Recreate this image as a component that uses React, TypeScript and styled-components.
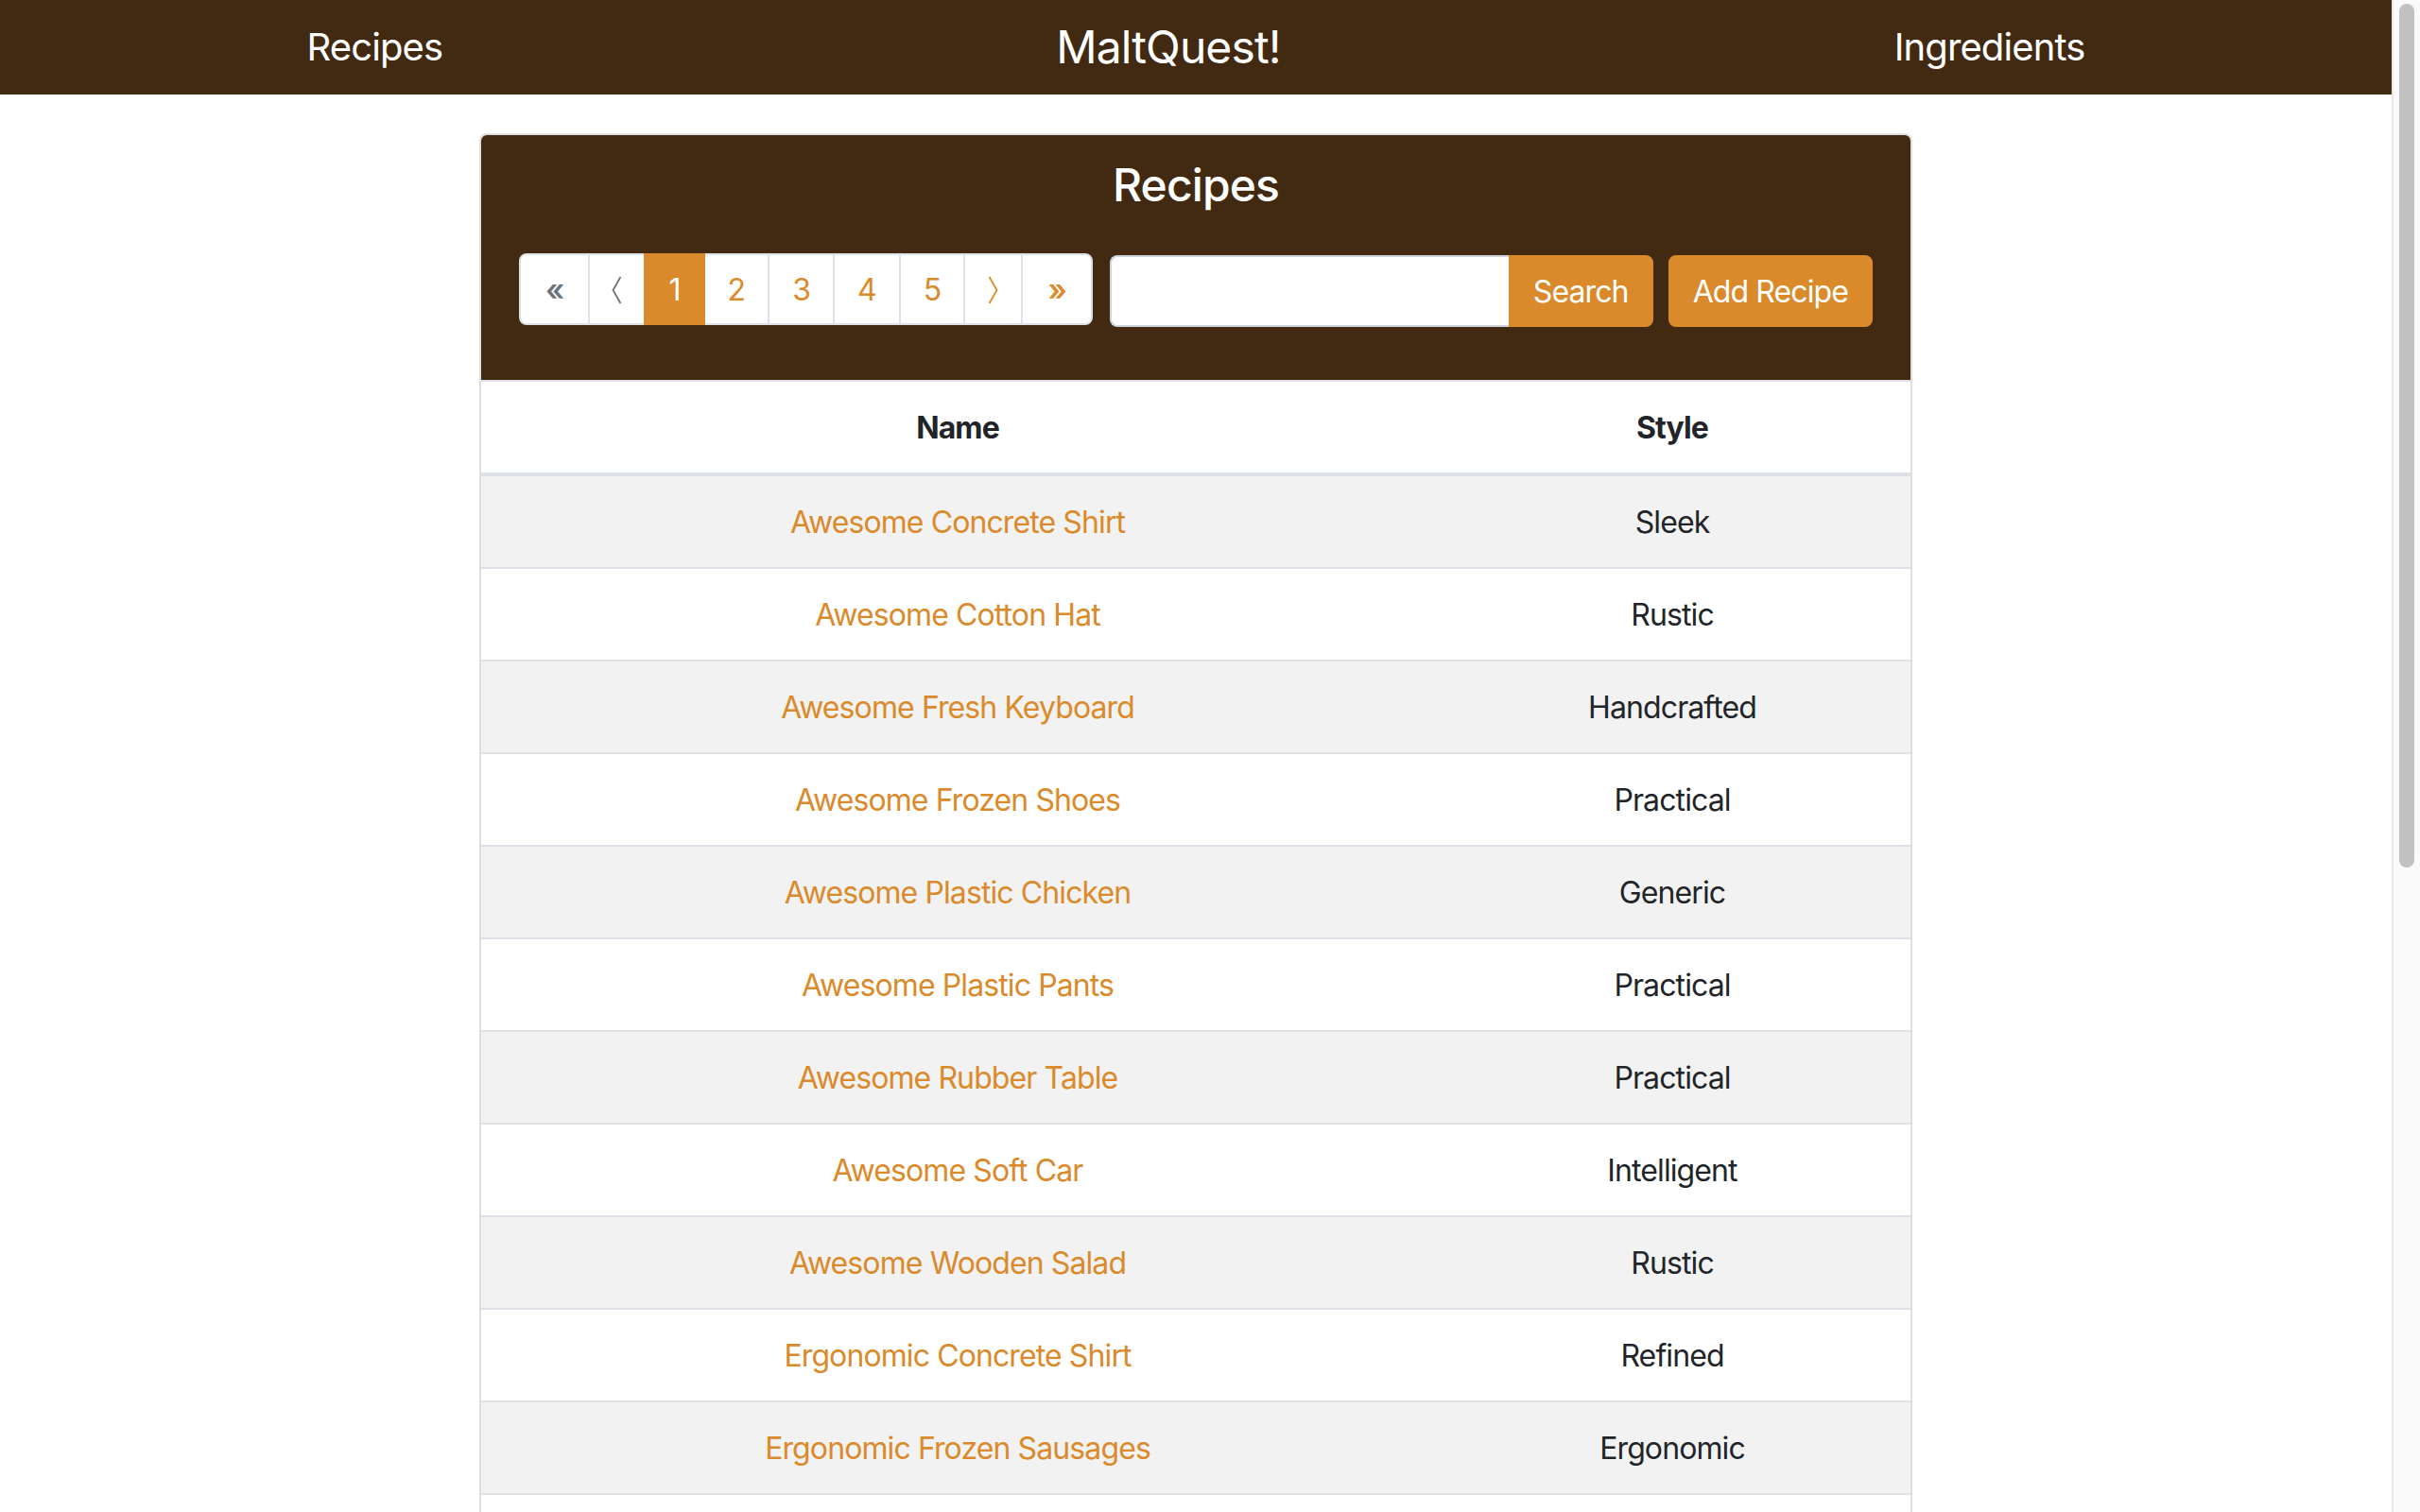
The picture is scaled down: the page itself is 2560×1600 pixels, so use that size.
import React from "react";
import styled, { createGlobalStyle } from "styled-components";

const ORANGE = "#da8a2b";
const BROWN = "#422a12";

const GlobalStyle = createGlobalStyle`
  html, body {
    margin: 0;
    padding: 0;
    height: 100%;
    overflow: hidden;
  }
  #root { height: 100%; }
  * { box-sizing: border-box; }
`;

const Screen = styled.div`
  display: flex;
  height: 100vh;
  overflow: hidden;
  background: #ffffff;
  font-family: "Inter", "Liberation Sans", sans-serif;
  font-size: 32px;
  line-height: 1.5;
  letter-spacing: -0.028em;
  color: #212529;
`;

const Viewport = styled.div`
  flex: 1;
  min-width: 0;
  overflow: hidden;
`;

const ScrollTrack = styled.div`
  flex: 0 0 30px;
  background: #fafafa;
  border-left: 2px solid #e8e8e8;
  padding: 4px 6px 0;
`;

const ScrollThumb = styled.div`
  height: 914px;
  border-radius: 8px;
  background: #c1c1c1;
`;

const NavBar = styled.nav`
  height: 100px;
  background: ${BROWN};
  display: flex;
  align-items: center;
  justify-content: space-around;
`;

const NavLink = styled.a<{ $brand?: boolean }>`
  color: #ffffff;
  text-decoration: none;
  font-size: ${(p) => (p.$brand ? "48px" : "40px")};
  font-weight: 400;
  line-height: 1.2;
  white-space: nowrap;
`;

const Main = styled.main`
  padding: 41px 0 32px;
`;

const Card = styled.section`
  width: 1516px;
  margin: 0 auto;
  border: 2px solid rgba(0, 0, 0, 0.125);
  border-radius: 8px;
  overflow: hidden;
  background: #ffffff;
`;

const CardHeader = styled.header`
  background: ${BROWN};
  padding: 24px 40px 24px;
  text-align: center;
`;

const Title = styled.h4`
  margin: 0 0 43px;
  font-size: 48px;
  font-weight: 500;
  line-height: 1.2;
  color: #ffffff;
`;

const Toolbar = styled.div`
  display: flex;
  align-items: flex-start;
  margin-bottom: 32px;
`;

const Pagination = styled.ul`
  display: flex;
  flex-shrink: 0;
  list-style: none;
  margin: 0;
  padding: 0;
`;

const PageItem = styled.li`
  display: flex;
  & + & { margin-left: -2px; }
  &:first-child > * { border-radius: 8px 0 0 8px; }
  &:last-child > * { border-radius: 0 8px 8px 0; }
`;

const PageLink = styled.a<{ $active?: boolean; $disabled?: boolean; $pad?: number; $bold?: boolean }>`
  display: flex;
  align-items: center;
  justify-content: center;
  height: 76px;
  padding: 17px ${(p) => p.$pad ?? 24}px 15px;
  line-height: 40px;
  font-size: 32px;
  font-weight: ${(p) => (p.$bold ? 600 : 400)};
  text-decoration: none;
  border: 2px solid ${(p) => (p.$active ? ORANGE : "#dee2e6")};
  background: ${(p) => (p.$active ? ORANGE : "#ffffff")};
  color: ${(p) => (p.$active ? "#ffffff" : p.$disabled ? "#6c757d" : ORANGE)};
  position: relative;
  z-index: ${(p) => (p.$active ? 1 : 0)};
`;

const SearchForm = styled.form`
  flex: 1;
  min-width: 0;
  display: flex;
  margin: 2px 0 0 18px;
`;

const SearchInput = styled.input`
  flex: 1;
  min-width: 0;
  height: 76px;
  padding: 12px 24px;
  font: inherit;
  border: 2px solid #ced4da;
  border-right: none;
  border-radius: 8px 0 0 8px;
  background: #ffffff;
  outline: none;
`;

const Button = styled.button<{ $attached?: boolean }>`
  flex-shrink: 0;
  height: 76px;
  padding: 2px 24px 0;
  font-family: inherit;
  font-size: 32px;
  font-weight: 400;
  line-height: 48px;
  letter-spacing: inherit;
  white-space: nowrap;
  color: #ffffff;
  background: ${ORANGE};
  border: 2px solid ${ORANGE};
  border-radius: ${(p) => (p.$attached ? "0 8px 8px 0" : "8px")};
  margin-top: ${(p) => (p.$attached ? "0" : "2px")};
  margin-left: ${(p) => (p.$attached ? "0" : "16px")};
  cursor: pointer;
`;

const Table = styled.table`
  width: 100%;
  border-collapse: collapse;
`;

const HeadCell = styled.th<{ $w: string }>`
  width: ${(p) => p.$w};
  padding: 25px 24px 23px;
  line-height: 48px;
  font-weight: 700;
  text-align: center;
  border-top: 2px solid #dee2e6;
  border-bottom: 4px solid #dee2e6;
`;

const Row = styled.tr`
  &:nth-child(odd) { background: rgba(0, 0, 0, 0.05); }
`;

const Cell = styled.td`
  padding: 25px 24px 23px;
  line-height: 48px;
  text-align: center;
  border-top: 2px solid #dee2e6;
`;

const RecipeLink = styled.a`
  color: ${ORANGE};
  text-decoration: none;
`;

const Chevron = ({ dir }: { dir: "left" | "right" }) => (
  <svg width="11" height="30" viewBox="0 0 11 30" aria-hidden>
    <polyline
      points={dir === "left" ? "9.5,1 1.5,15 9.5,29" : "1.5,1 9.5,15 1.5,29"}
      fill="none"
      stroke="currentColor"
      strokeWidth="1.8"
      strokeLinejoin="miter"
    />
  </svg>
);

const recipes: [string, string][] = [
  ["Awesome Concrete Shirt", "Sleek"],
  ["Awesome Cotton Hat", "Rustic"],
  ["Awesome Fresh Keyboard", "Handcrafted"],
  ["Awesome Frozen Shoes", "Practical"],
  ["Awesome Plastic Chicken", "Generic"],
  ["Awesome Plastic Pants", "Practical"],
  ["Awesome Rubber Table", "Practical"],
  ["Awesome Soft Car", "Intelligent"],
  ["Awesome Wooden Salad", "Rustic"],
  ["Ergonomic Concrete Shirt", "Refined"],
  ["Ergonomic Frozen Sausages", "Ergonomic"],
  ["Ergonomic Granite Bacon", "Licensed"],
  ["Ergonomic Wooden Pizza", "Tasty"],
  ["Fantastic Cotton Mouse", "Unbranded"],
  ["Fantastic Metal Chair", "Gorgeous"],
  ["Generic Fresh Tuna", "Small"],
  ["Generic Steel Computer", "Incredible"],
  ["Gorgeous Granite Ball", "Fantastic"],
  ["Handcrafted Rubber Gloves", "Licensed"],
  ["Incredible Concrete Hat", "Sleek"],
  ["Incredible Soft Fish", "Awesome"],
  ["Intelligent Frozen Cheese", "Rustic"],
  ["Licensed Granite Bike", "Refined"],
];

export default function App() {
  return (
    <>
      <GlobalStyle />
      <Screen>
        <Viewport>
          <NavBar>
            <NavLink href="#">Recipes</NavLink>
            <NavLink href="#" $brand>MaltQuest!</NavLink>
            <NavLink href="#">Ingredients</NavLink>
          </NavBar>
          <Main>
            <Card>
              <CardHeader>
                <Title>Recipes</Title>
                <Toolbar>
                  <Pagination>
                    <PageItem><PageLink href="#" $disabled $bold $pad={26}>«</PageLink></PageItem>
                    <PageItem><PageLink href="#" $disabled $pad={23}><Chevron dir="left" /></PageLink></PageItem>
                    <PageItem><PageLink href="#" $active>1</PageLink></PageItem>
                    <PageItem><PageLink href="#">2</PageLink></PageItem>
                    <PageItem><PageLink href="#">3</PageLink></PageItem>
                    <PageItem><PageLink href="#">4</PageLink></PageItem>
                    <PageItem><PageLink href="#">5</PageLink></PageItem>
                    <PageItem><PageLink href="#"><Chevron dir="right" /></PageLink></PageItem>
                    <PageItem><PageLink href="#" $bold $pad={26}>»</PageLink></PageItem>
                  </Pagination>
                  <SearchForm onSubmit={(e) => e.preventDefault()}>
                    <SearchInput type="text" />
                    <Button type="submit" $attached>Search</Button>
                  </SearchForm>
                  <Button type="button">Add Recipe</Button>
                </Toolbar>
              </CardHeader>
              <Table>
                <thead>
                  <tr>
                    <HeadCell $w="66.67%">Name</HeadCell>
                    <HeadCell $w="33.33%">Style</HeadCell>
                  </tr>
                </thead>
                <tbody>
                  {recipes.map(([name, style]) => (
                    <Row key={name}>
                      <Cell><RecipeLink href="#">{name}</RecipeLink></Cell>
                      <Cell>{style}</Cell>
                    </Row>
                  ))}
                </tbody>
              </Table>
            </Card>
          </Main>
        </Viewport>
        <ScrollTrack>
          <ScrollThumb />
        </ScrollTrack>
      </Screen>
    </>
  );
}
